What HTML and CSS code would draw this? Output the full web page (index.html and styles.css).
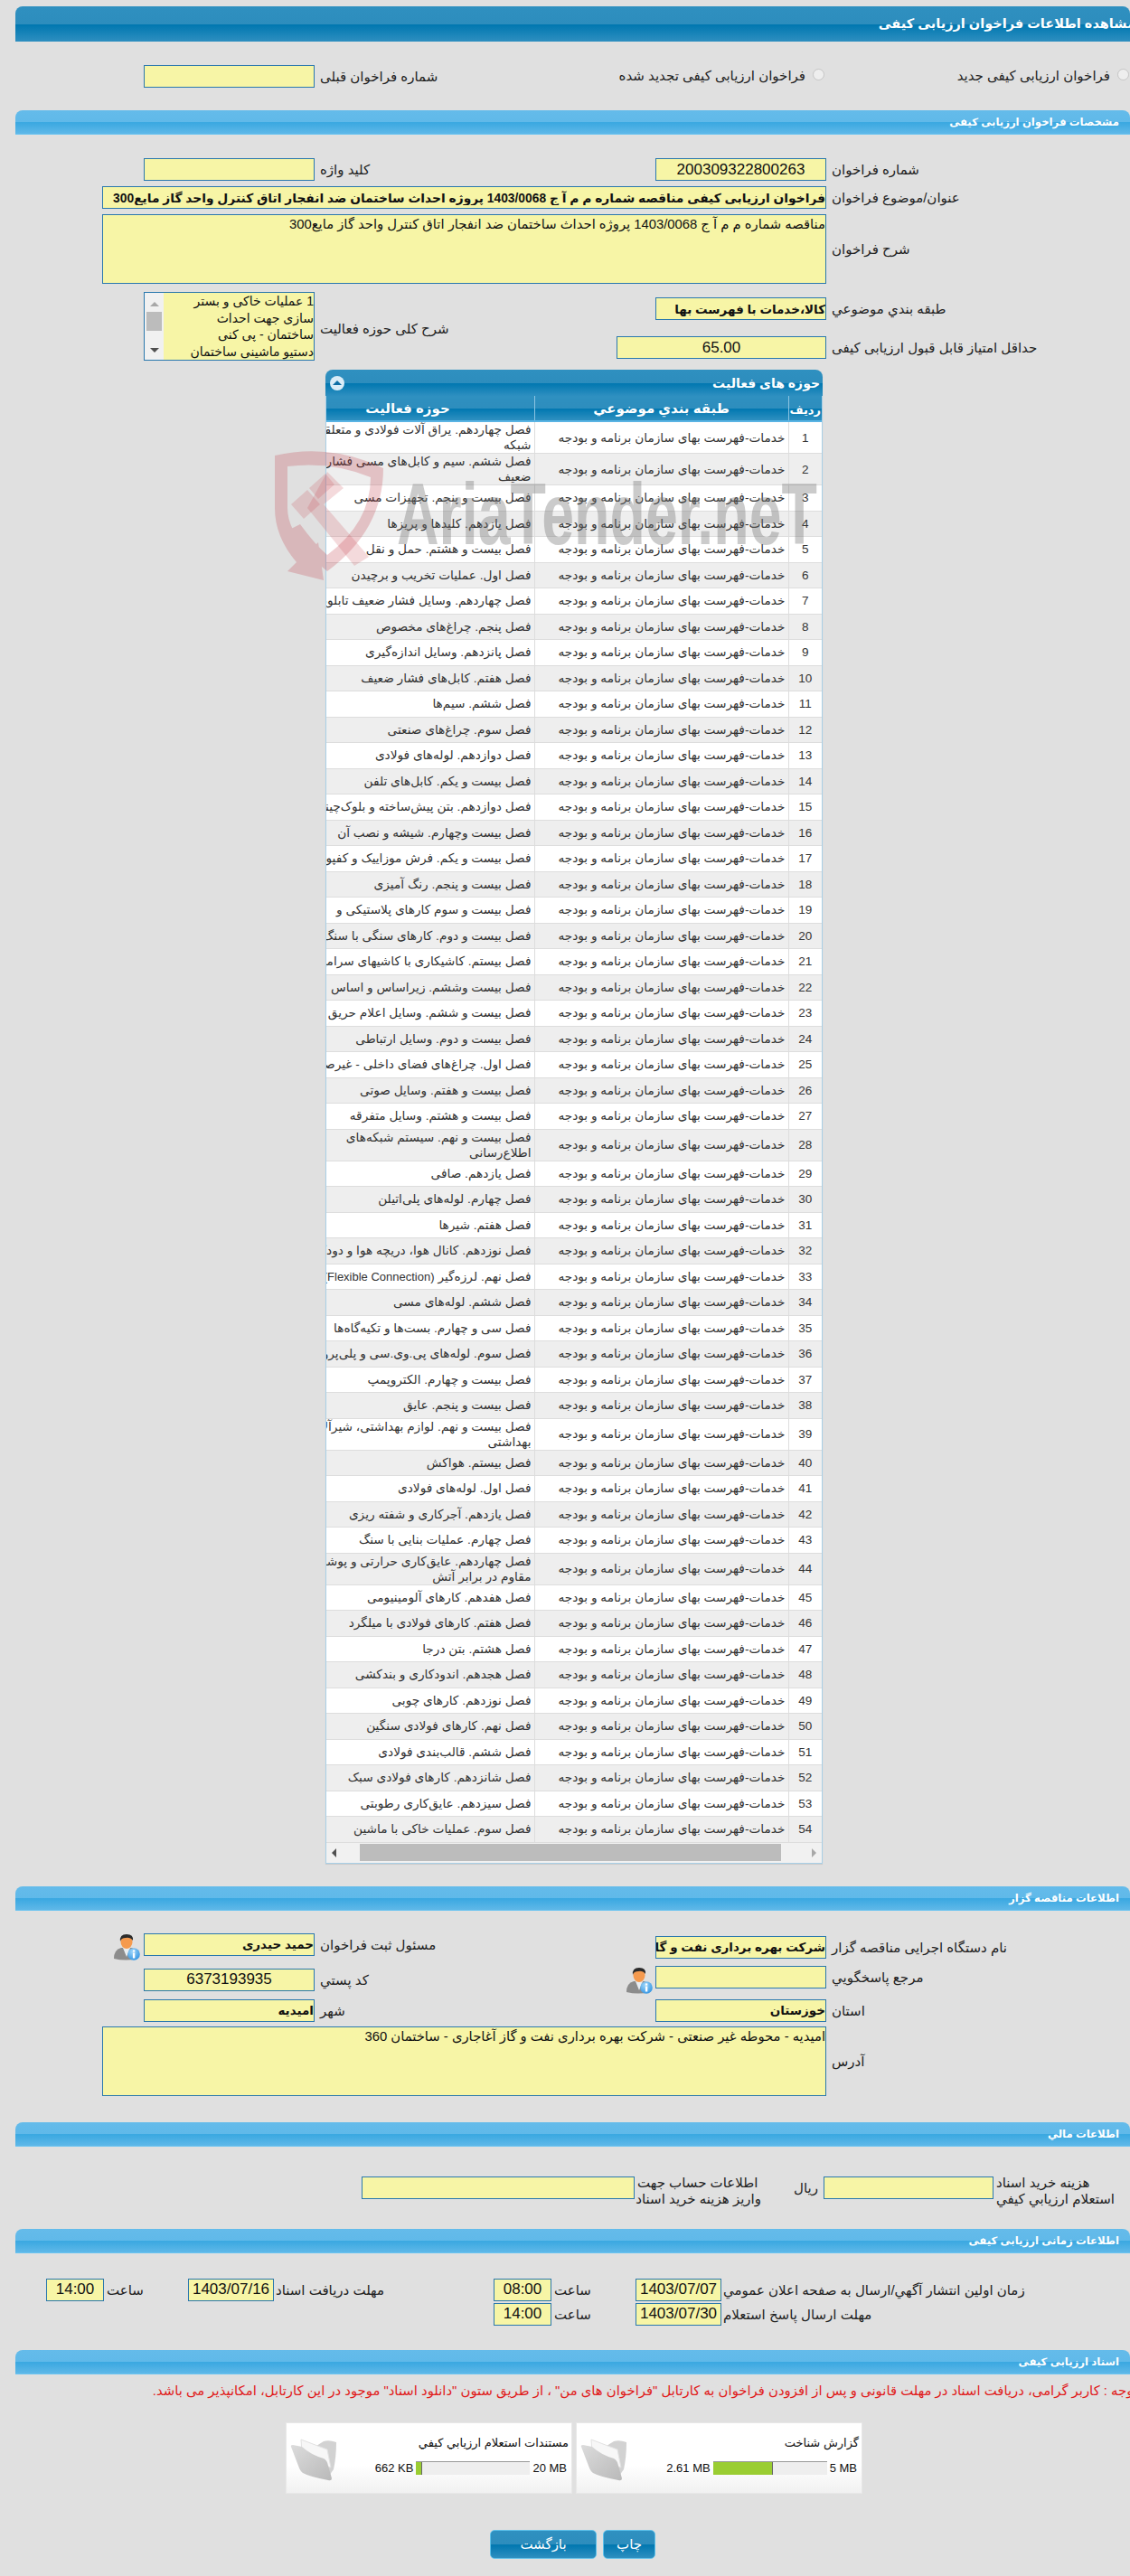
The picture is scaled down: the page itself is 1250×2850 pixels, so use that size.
FILE: index.html
```html
<!DOCTYPE html>
<html lang="fa" dir="rtl">
  <head>
    <meta charset="UTF-8" />
    <title>مشاهده اطلاعات فراخوان ارزیابی کیفی</title>
    <link rel="stylesheet" href="styles.css">
  </head>
  <body>
    <!-- shared icons -->
    <svg class="icon-defs" aria-hidden="true">
      <defs>
        <linearGradient id="folderFront" x1="0" y1="0" x2="1" y2="1">
          <stop offset="0" stop-color="#dcdcdc" />
          <stop offset="1" stop-color="#b9b9b9" />
        </linearGradient>
        <radialGradient id="infoBall" cx="0.4" cy="0.3" r="0.8">
          <stop offset="0" stop-color="#9fd6fa" />
          <stop offset="1" stop-color="#2a8fe0" />
        </radialGradient>
      </defs>
      <symbol id="folderIcon" viewBox="0 0 56 50">
        <path d="M14 4 L30 10 L38 5 Q44 3 52 6 Q52 22 49 36 L42 46 L14 20 Z" fill="#d2d2d2" />
        <path d="M13 3 L42 14 L46 34 L30 28 L14 18 Z" fill="#f7f7f7" stroke="#e2e2e2" stroke-width="1" />
        <path d="M2 11 Q1 9 4 9 L14 11 Q24 20 38 24 Q42 26 43 32 L47 46 Q47 49 43 48 Q22 44 15 40 Q12 38 10 32 Z" fill="url(#folderFront)" />
      </symbol>
      <symbol id="personIcon" viewBox="0 0 30 30">
        <path d="M1 28 Q1 18 9 16 L21 16 Q27 18 27 28 Q14 31 1 28 Z" fill="#8c8c8c" />
        <path d="M11 16 L15 26 L19 16 Z" fill="#e9eef2" />
        <ellipse cx="15" cy="9.5" rx="6.5" ry="7.5" fill="#f59a4e" />
        <path d="M8 9 Q7 1 15 1 Q23 1 22 8 Q19 4 14 5 Q9 5 8 9 Z" fill="#2b2b2b" />
        <circle cx="23" cy="23" r="6.8" fill="url(#infoBall)" />
        <rect x="21.9" y="21.5" width="2.4" height="6" fill="#fff" />
        <rect x="21.9" y="18.4" width="2.4" height="2.2" fill="#fff" />
      </symbol>
    </svg>

    <div class="page">
      <h1 class="page-title"><span>مشاهده اطلاعات فراخوان ارزیابی کیفی</span></h1>

      <div class="row row-radio">
        <label class="radio-item radio-new"><input type="radio" disabled /> فراخوان ارزیابی کیفی جدید</label>
        <label class="radio-item radio-renew"><input type="radio" disabled /> فراخوان ارزیابی کیفی تجدید شده</label>
        <div class="label label-prev">شماره فراخوان قبلی</div>
        <input class="field field-md" readonly />
      </div>

      <!-- مشخصات -->
      <h2 class="section-head">مشخصات فراخوان ارزیابی کیفی</h2>

      <div class="row first-row">
        <div class="label label-a">شماره فراخوان</div>
        <input class="field field-md center" value="200309322800263" readonly />
        <div class="label label-b">کلید واژه</div>
        <input class="field field-md" readonly />
      </div>
      <div class="row gap-row">
        <div class="label label-a">عنوان/موضوع فراخوان</div>
        <input class="field field-wide bold field-title" value="فراخوان ارزیابی کیفی مناقصه شماره م م آ ج 1403/0068 پروژه احداث ساختمان ضد انفجار اتاق کنترل واحد گاز مایع300" readonly />
      </div>
      <div class="row gap-row row-center">
        <div class="label label-a">شرح فراخوان</div>
        <textarea class="field field-wide area" readonly>مناقصه شماره م م آ ج 1403/0068 پروژه احداث ساختمان ضد انفجار اتاق کنترل واحد گاز مایع300</textarea>
      </div>

      <div class="row group-row">
        <div class="group-a">
          <div class="row sub-select">
            <div class="label label-a">طبقه بندي موضوعي</div>
            <input class="field field-md bold" value="کالا،خدمات با فهرست بها" readonly />
          </div>
          <div class="row sub-score">
            <div class="label label-a">حداقل امتیاز قابل قبول ارزیابی کیفی</div>
            <input class="field field-score center" value="65.00" readonly />
          </div>
        </div>
        <div class="label label-group">شرح کلی حوزه فعالیت</div>
        <div class="listbox">
          <div class="listbox-text">
            <div>1 عملیات خاکی و بستر</div>
            <div>سازی جهت احداث</div>
            <div>ساختمان - پی کنی</div>
            <div>دستیو ماشینی ساختمان</div>
          </div>
          <div class="listbox-bar">
            <span class="arrow-up"></span>
            <span class="listbox-thumb"></span>
            <span class="arrow-down"></span>
          </div>
        </div>
      </div>

      <!-- جدول حوزه ها -->
      <div class="panel">
        <div class="panel-head">
          <span class="panel-title">حوزه های فعالیت</span>
          <span class="collapse-btn"><span class="collapse-tri"></span></span>
        </div>
        <div class="table-scroll">
          <table class="activity-table">
            <colgroup>
              <col class="col-num" /><col class="col-cat" /><col class="col-act" />
            </colgroup>
            <thead>
              <tr><th class="th-num">ردیف</th><th>طبقه بندي موضوعي</th><th>حوزه فعالیت</th></tr>
            </thead>
            <tbody>
              <tr class="tall"><td class="num">1</td><td>خدمات-فهرست بهای سازمان برنامه و بودجه</td><td>فصل چهاردهم. یراق آلات فولادی و متعلقات<br>شبکه</td></tr>
              <tr class="tall"><td class="num">2</td><td>خدمات-فهرست بهای سازمان برنامه و بودجه</td><td>فصل ششم. سیم و کابل‌های مسی فشار<br>ضعیف</td></tr>
              <tr><td class="num">3</td><td>خدمات-فهرست بهای سازمان برنامه و بودجه</td><td>فصل بیست و پنجم. تجهیزات مسی</td></tr>
              <tr><td class="num">4</td><td>خدمات-فهرست بهای سازمان برنامه و بودجه</td><td>فصل یازدهم. کلیدها و پریزها</td></tr>
              <tr><td class="num">5</td><td>خدمات-فهرست بهای سازمان برنامه و بودجه</td><td>فصل بیست و هشتم. حمل و نقل</td></tr>
              <tr><td class="num">6</td><td>خدمات-فهرست بهای سازمان برنامه و بودجه</td><td>فصل اول. عملیات تخریب و برچیدن</td></tr>
              <tr><td class="num">7</td><td>خدمات-فهرست بهای سازمان برنامه و بودجه</td><td>فصل چهاردهم. وسایل فشار ضعیف تابلویی</td></tr>
              <tr><td class="num">8</td><td>خدمات-فهرست بهای سازمان برنامه و بودجه</td><td>فصل پنجم. چراغ‌های مخصوص</td></tr>
              <tr><td class="num">9</td><td>خدمات-فهرست بهای سازمان برنامه و بودجه</td><td>فصل پانزدهم. وسایل اندازه‌گیری</td></tr>
              <tr><td class="num">10</td><td>خدمات-فهرست بهای سازمان برنامه و بودجه</td><td>فصل هفتم. کابل‌های فشار ضعیف</td></tr>
              <tr><td class="num">11</td><td>خدمات-فهرست بهای سازمان برنامه و بودجه</td><td>فصل ششم. سیم‌ها</td></tr>
              <tr><td class="num">12</td><td>خدمات-فهرست بهای سازمان برنامه و بودجه</td><td>فصل سوم. چراغ‌های صنعتی</td></tr>
              <tr><td class="num">13</td><td>خدمات-فهرست بهای سازمان برنامه و بودجه</td><td>فصل دوازدهم. لوله‌های فولادی</td></tr>
              <tr><td class="num">14</td><td>خدمات-فهرست بهای سازمان برنامه و بودجه</td><td>فصل بیست و یکم. کابل‌های تلفن</td></tr>
              <tr><td class="num">15</td><td>خدمات-فهرست بهای سازمان برنامه و بودجه</td><td>فصل دوازدهم. بتن پیش‌ساخته و بلوک‌چینی</td></tr>
              <tr><td class="num">16</td><td>خدمات-فهرست بهای سازمان برنامه و بودجه</td><td>فصل بیست وچهارم. شیشه و نصب آن</td></tr>
              <tr><td class="num">17</td><td>خدمات-فهرست بهای سازمان برنامه و بودجه</td><td>فصل بیست و یکم. فرش موزاییک و کفپوش</td></tr>
              <tr><td class="num">18</td><td>خدمات-فهرست بهای سازمان برنامه و بودجه</td><td>فصل بیست و پنجم. رنگ آمیزی</td></tr>
              <tr><td class="num">19</td><td>خدمات-فهرست بهای سازمان برنامه و بودجه</td><td>فصل بیست و سوم کارهای پلاستیکی و</td></tr>
              <tr><td class="num">20</td><td>خدمات-فهرست بهای سازمان برنامه و بودجه</td><td>فصل بیست و دوم. کارهای سنگی با سنگ</td></tr>
              <tr><td class="num">21</td><td>خدمات-فهرست بهای سازمان برنامه و بودجه</td><td>فصل بیستم. کاشیکاری با کاشیهای سرامیکی</td></tr>
              <tr><td class="num">22</td><td>خدمات-فهرست بهای سازمان برنامه و بودجه</td><td>فصل بیست وششم. زیراساس و اساس</td></tr>
              <tr><td class="num">23</td><td>خدمات-فهرست بهای سازمان برنامه و بودجه</td><td>فصل بیست و ششم. وسایل اعلام حریق</td></tr>
              <tr><td class="num">24</td><td>خدمات-فهرست بهای سازمان برنامه و بودجه</td><td>فصل بیست و دوم. وسایل ارتباطی</td></tr>
              <tr><td class="num">25</td><td>خدمات-فهرست بهای سازمان برنامه و بودجه</td><td>فصل اول. چراغ‌های فضای داخلی - غیرصنعتی</td></tr>
              <tr><td class="num">26</td><td>خدمات-فهرست بهای سازمان برنامه و بودجه</td><td>فصل بیست و هفتم. وسایل صوتی</td></tr>
              <tr><td class="num">27</td><td>خدمات-فهرست بهای سازمان برنامه و بودجه</td><td>فصل بیست و هشتم. وسایل متفرقه</td></tr>
              <tr class="tall"><td class="num">28</td><td>خدمات-فهرست بهای سازمان برنامه و بودجه</td><td>فصل بیست و نهم. سیستم شبکه‌های<br>اطلاع‌رسانی</td></tr>
              <tr><td class="num">29</td><td>خدمات-فهرست بهای سازمان برنامه و بودجه</td><td>فصل یازدهم. صافی</td></tr>
              <tr><td class="num">30</td><td>خدمات-فهرست بهای سازمان برنامه و بودجه</td><td>فصل چهارم. لوله‌های پلی‌اتیلن</td></tr>
              <tr><td class="num">31</td><td>خدمات-فهرست بهای سازمان برنامه و بودجه</td><td>فصل هفتم. شیرها</td></tr>
              <tr><td class="num">32</td><td>خدمات-فهرست بهای سازمان برنامه و بودجه</td><td>فصل نوزدهم. کانال هوا، دریچه هوا و دودکش</td></tr>
              <tr><td class="num">33</td><td>خدمات-فهرست بهای سازمان برنامه و بودجه</td><td>فصل نهم. لرزه‌گیر <span class="latin">(Flexible Connection)</span></td></tr>
              <tr><td class="num">34</td><td>خدمات-فهرست بهای سازمان برنامه و بودجه</td><td>فصل ششم. لوله‌های مسی</td></tr>
              <tr><td class="num">35</td><td>خدمات-فهرست بهای سازمان برنامه و بودجه</td><td>فصل سی و چهارم. بست‌ها و تکیه‌گاه‌ها</td></tr>
              <tr><td class="num">36</td><td>خدمات-فهرست بهای سازمان برنامه و بودجه</td><td>فصل سوم. لوله‌های پی.وی.سی و پلی‌پروپیلن</td></tr>
              <tr><td class="num">37</td><td>خدمات-فهرست بهای سازمان برنامه و بودجه</td><td>فصل بیست و چهارم. الکتروپمپ</td></tr>
              <tr><td class="num">38</td><td>خدمات-فهرست بهای سازمان برنامه و بودجه</td><td>فصل بیست و پنجم. عایق</td></tr>
              <tr class="tall"><td class="num">39</td><td>خدمات-فهرست بهای سازمان برنامه و بودجه</td><td>فصل بیست و نهم. لوازم بهداشتی، شیرآلات<br>بهداشتی</td></tr>
              <tr><td class="num">40</td><td>خدمات-فهرست بهای سازمان برنامه و بودجه</td><td>فصل بیستم. هواکش</td></tr>
              <tr><td class="num">41</td><td>خدمات-فهرست بهای سازمان برنامه و بودجه</td><td>فصل اول. لوله‌های فولادی</td></tr>
              <tr><td class="num">42</td><td>خدمات-فهرست بهای سازمان برنامه و بودجه</td><td>فصل یازدهم. آجرکاری و شفته ریزی</td></tr>
              <tr><td class="num">43</td><td>خدمات-فهرست بهای سازمان برنامه و بودجه</td><td>فصل چهارم. عملیات بنایی با سنگ</td></tr>
              <tr class="tall"><td class="num">44</td><td>خدمات-فهرست بهای سازمان برنامه و بودجه</td><td>فصل چهاردهم. عایق‌کاری حرارتی و پوشش‌های<br>مقاوم در برابر آتش</td></tr>
              <tr><td class="num">45</td><td>خدمات-فهرست بهای سازمان برنامه و بودجه</td><td>فصل هفدهم. کارهای آلومینیومی</td></tr>
              <tr><td class="num">46</td><td>خدمات-فهرست بهای سازمان برنامه و بودجه</td><td>فصل هفتم. کارهای فولادی با میلگرد</td></tr>
              <tr><td class="num">47</td><td>خدمات-فهرست بهای سازمان برنامه و بودجه</td><td>فصل هشتم. بتن درجا</td></tr>
              <tr><td class="num">48</td><td>خدمات-فهرست بهای سازمان برنامه و بودجه</td><td>فصل هجدهم. اندودکاری و بندکشی</td></tr>
              <tr><td class="num">49</td><td>خدمات-فهرست بهای سازمان برنامه و بودجه</td><td>فصل نوزدهم. کارهای چوبی</td></tr>
              <tr><td class="num">50</td><td>خدمات-فهرست بهای سازمان برنامه و بودجه</td><td>فصل نهم. کارهای فولادی سنگین</td></tr>
              <tr><td class="num">51</td><td>خدمات-فهرست بهای سازمان برنامه و بودجه</td><td>فصل ششم. قالب‌بندی فولادی</td></tr>
              <tr><td class="num">52</td><td>خدمات-فهرست بهای سازمان برنامه و بودجه</td><td>فصل شانزدهم. کارهای فولادی سبک</td></tr>
              <tr><td class="num">53</td><td>خدمات-فهرست بهای سازمان برنامه و بودجه</td><td>فصل سیزدهم. عایق‌کاری رطوبتی</td></tr>
              <tr><td class="num">54</td><td>خدمات-فهرست بهای سازمان برنامه و بودجه</td><td>فصل سوم. عملیات خاکی با ماشین</td></tr>
            </tbody>
          </table>
        </div>
        <div class="hscroll">
          <span class="arrow-left"></span>
          <span class="hscroll-thumb"></span>
          <span class="arrow-right"></span>
        </div>
      </div>

      <!-- watermark over the table -->
      <svg class="watermark" viewBox="0 0 620 150" aria-hidden="true">
        <path d="M8 8 Q70 -6 128 22 Q128 90 66 136 Q42 118 24 90 L36 84 Q52 106 66 118 Q114 82 114 32 Q70 14 22 20 L22 66 Q22 78 28 90 L46 114 L56 104 L62 146 L22 136 L32 126 Q8 98 8 66 Z" class="wm-red" />
        <path d="M26 62 L44 46 L58 62 L40 78 Z M46 44 L64 28 L74 40 L56 56 Z" class="wm-red-light" />
        <path d="M66 26 L84 44 L62 62 L112 120 L96 130 L44 66 Z" class="wm-red-light" />
        <text x="143" y="106" class="wm-text" textLength="465" lengthAdjust="spacingAndGlyphs">AriaTender.neT</text>
      </svg>

      <!-- مناقصه گزار -->
      <h2 class="section-head head-owner">اطلاعات مناقصه گزار</h2>

      <div class="row owner-row">
        <div class="label label-a offset-3">نام دستگاه اجرایی مناقصه گزار</div>
        <input class="field field-md bold offset-3" value="شرکت بهره برداری نفت و گاز آغاجاری" readonly />
        <div class="label label-b">مسئول ثبت فراخوان</div>
        <input class="field field-md bold" value="حمید حیدری" readonly />
        <svg class="person"><use href="#personIcon" /></svg>
      </div>
      <div class="row row-contact">
        <div class="label label-a">مرجع پاسخگويي</div>
        <input class="field field-md" readonly />
        <div class="label-b-icon">
          <svg class="person person-a"><use href="#personIcon" /></svg>
          <div class="label label-b-inner offset-3">کد پستي</div>
        </div>
        <input class="field field-md center offset-3" value="6373193935" readonly />
      </div>
      <div class="row row-city">
        <div class="label label-a">استان</div>
        <input class="field field-md bold" value="خوزستان" readonly />
        <div class="label label-b">شهر</div>
        <input class="field field-md bold" value="امیدیه" readonly />
      </div>
      <div class="row row-address row-center">
        <div class="label label-a">آدرس</div>
        <textarea class="field field-wide area" readonly>امیدیه - محوطه غیر صنعتی - شرکت بهره برداری نفت و گاز آغاجاری - ساختمان 360</textarea>
      </div>

      <!-- مالی -->
      <h2 class="section-head head-money">اطلاعات مالي</h2>

      <div class="row row-money">
        <div class="label label-money">هزینه خرید اسناد<br>استعلام ارزیابي کیفي</div>
        <input class="field field-cost" readonly />
        <div class="label rial">ریال</div>
        <div class="label label-account">اطلاعات حساب جهت<br>واریز هزینه خرید اسناد</div>
        <input class="field field-account" readonly />
      </div>

      <!-- زمان -->
      <h2 class="section-head head-time">اطلاعات زمانی ارزیابی کیفی</h2>

      <div class="row row-time">
        <div class="label label-date">زمان اولین انتشار آگهي/ارسال به صفحه اعلان عمومي</div>
        <input class="field field-date center" value="1403/07/07" readonly />
        <div class="label label-hour">ساعت</div>
        <input class="field field-time center" value="08:00" readonly />
        <div class="label label-date2">مهلت دریافت اسناد</div>
        <input class="field field-date center" value="1403/07/16" readonly />
        <div class="label label-hour">ساعت</div>
        <input class="field field-time center" value="14:00" readonly />
      </div>
      <div class="row row-time2">
        <div class="label label-date">مهلت ارسال پاسخ استعلام</div>
        <input class="field field-date center" value="1403/07/30" readonly />
        <div class="label label-hour">ساعت</div>
        <input class="field field-time center" value="14:00" readonly />
      </div>

      <!-- اسناد -->
      <h2 class="section-head head-docs">اسناد ارزیابی کیفی</h2>

      <p class="note">توجه : کاربر گرامی، دریافت اسناد در مهلت قانونی و پس از افزودن فراخوان به کارتابل "فراخوان های من" ، از طریق ستون "دانلود اسناد" موجود در این کارتابل، امکانپذیر می باشد.</p>

      <div class="doc-list">
        <div class="doc-card">
          <div class="doc-body">
            <div class="doc-title">گزارش شناخت</div>
            <div class="doc-usage">
              <span class="doc-size">5 MB</span>
              <div class="doc-bar"><div class="doc-fill" style="width: 53%"></div></div>
              <span class="doc-size">2.61 MB</span>
            </div>
          </div>
          <svg class="folder"><use href="#folderIcon" /></svg>
        </div>
        <div class="doc-card">
          <div class="doc-body">
            <div class="doc-title">مستندات استعلام ارزيابي کيفي</div>
            <div class="doc-usage">
              <span class="doc-size">20 MB</span>
              <div class="doc-bar"><div class="doc-fill" style="width: 5%"></div></div>
              <span class="doc-size">662 KB</span>
            </div>
          </div>
          <svg class="folder"><use href="#folderIcon" /></svg>
        </div>
      </div>

      <div class="actions">
        <button class="btn btn-print" type="button">چاپ</button>
        <button class="btn btn-back" type="button">بازگشت</button>
      </div>
    </div>
  </body>
</html>
```

FILE: styles.css
```css
* {
  margin: 0;
  padding: 0;
  box-sizing: border-box;
}

html,
body {
  overflow: hidden;
}

body {
  height: 2850px;
  background-color: #e0e0e0;
  font-family: "Liberation Sans", "DejaVu Sans", sans-serif;
  font-size: 15px;
  color: #111;
}

.icon-defs {
  position: absolute;
  width: 0;
  height: 0;
}

.page {
  position: relative;
  padding: 7px 0 0 17px;
}

/* headers */
.page-title {
  height: 39px;
  border-radius: 8px 8px 0 0;
  background: linear-gradient(#2f90c0 0%, #2d8dbd 50%, #0077b0 52%, #2e8fc0 100%);
  color: #fff;
  font-size: 14.5px;
  line-height: 38px;
  white-space: nowrap;
  overflow: hidden;
}

.page-title span {
  display: inline-block;
  margin-right: -6px;
}

.section-head {
  height: 27px;
  margin-top: 26px;
  padding-right: 12px;
  border-radius: 8px 8px 0 0;
  border-bottom: 1px solid #6cc4f0;
  background: linear-gradient(#64bbea 0%, #60b9e9 50%, #3aa8e1 52%, #5fb8e8 100%);
  color: #fff;
  font-size: 11.7px;
  font-weight: bold;
  line-height: 26px;
}

.head-owner {
  margin-top: 25px;
}

.head-money {
  margin-top: 29px;
}

.head-time {
  margin-top: 22px;
}

.head-docs {
  margin-top: 27px;
}

/* form rows */
.row {
  display: flex;
  align-items: flex-start;
}

.row-center {
  align-items: center;
}

.first-row {
  margin-top: 26px;
}

.gap-row {
  margin-top: 6px;
}

.label {
  flex: none;
  line-height: 25px;
  white-space: nowrap;
  text-align: left;
  padding-left: 6px;
  color: #222;
}

.label-a {
  width: 336px;
}

.label-b {
  width: 377px;
}

.field {
  flex: none;
  display: block;
  height: 25px;
  border: 1px solid #2a78ad;
  border-radius: 0;
  background-color: #f7f5a6;
  font-family: inherit;
  font-size: 17px;
  color: #111;
  text-align: right;
  outline: none;
}

.field-md {
  width: 189px;
}

.field-wide {
  width: 801px;
}

.area {
  height: 77px;
  font-size: 14.8px;
  line-height: 20px;
  resize: none;
  overflow: hidden;
}

.center {
  text-align: center;
}

.bold {
  font-size: 13.5px;
  font-weight: bold;
}

.field-title {
  font-size: 13.8px;
}

.offset-3 {
  margin-top: 3px;
}

/* top radios */
.row-radio {
  margin-top: 26px;
  height: 24px;
}

.radio-item {
  flex: none;
  display: flex;
  align-items: center;
  gap: 8px;
  height: 24px;
  white-space: nowrap;
  color: #222;
}

.radio-item input {
  width: 13px;
  height: 13px;
  margin: 0 0 4px;
}

.radio-new {
  width: 338px;
  padding-right: 1px;
}

.radio-renew {
  width: 220px;
}

.label-prev {
  width: 344px;
}

/* group with the listbox */
.group-row {
  margin-top: 9px;
  height: 76px;
}

.group-a {
  flex: none;
  width: 525px;
}

.sub-select {
  margin-top: 6px;
}

.sub-score {
  margin-top: 18px;
}

.field-score {
  width: 232px;
}

.label-group {
  width: 377px;
  line-height: 82px;
}

.listbox {
  flex: none;
  display: flex;
  width: 189px;
  height: 76px;
  border: 1px solid #2a78ad;
  background-color: #f7f5a6;
  overflow: hidden;
}

.listbox-text {
  flex: 1;
  font-size: 14px;
  line-height: 18.5px;
  white-space: nowrap;
}

.listbox-bar {
  flex: none;
  display: flex;
  flex-direction: column;
  align-items: center;
  width: 21px;
  padding: 10px 0 8px;
  background-color: #f1f1f1;
}

.listbox-thumb {
  flex: none;
  width: 17px;
  height: 21px;
  margin: 6px 0 auto;
  background-color: #bcbcbc;
}

.arrow-up {
  border: 5px solid transparent;
  border-top: 0;
  border-bottom: 5px solid #a8a8a8;
}

.arrow-down {
  border: 5px solid transparent;
  border-bottom: 0;
  border-top: 5px solid #505050;
}

/* activity table */
.panel {
  width: 550px;
  margin: 10px 340px 0 0;
  border-radius: 8px 8px 0 0;
  overflow: hidden;
  border-bottom: 1px solid #a9cfe6;
  box-shadow: 0 1px 1px #c9c9c9;
}

.panel-head {
  display: flex;
  justify-content: space-between;
  align-items: center;
  height: 29px;
  padding: 0 3px 0 5px;
  background: linear-gradient(#2f90c0 0%, #2d8dbd 50%, #0077b0 52%, #2e8fc0 100%);
  color: #fff;
  font-size: 14px;
  font-weight: bold;
}

.collapse-btn {
  display: flex;
  align-items: center;
  justify-content: center;
  width: 16px;
  height: 16px;
  border-radius: 50%;
  background-color: #d9ecf7;
}

.collapse-tri {
  border: 5px solid transparent;
  border-top: 0;
  border-bottom: 5px solid #0d6ea5;
}

.table-scroll {
  overflow: hidden;
  background-color: #fff;
  border-right: 1px solid #a9cfe6;
  border-left: 1px solid #a9cfe6;
}

.activity-table {
  width: 598px;
  table-layout: fixed;
  border-collapse: collapse;
  font-size: 13.7px;
  color: #333;
}

.col-num {
  width: 37px;
}

.col-cat {
  width: 281px;
}

.col-act {
  width: 280px;
}

.activity-table th {
  height: 28px;
  border-left: 1px solid #8cc4e2;
  border-bottom: 2px solid #5ab4e4;
  background: linear-gradient(#2f90c0 0%, #2d8dbd 50%, #0077b0 52%, #2e8fc0 100%);
  color: #fff;
  font-size: 15px;
  font-weight: bold;
}

.activity-table .th-num {
  font-size: 13px;
  padding-top: 4px;
}

.activity-table td {
  height: 28.5px;
  padding: 0 3px;
  border-left: 1px solid #ddd;
  border-bottom: 1px solid #ddd;
  line-height: 17px;
  white-space: nowrap;
  overflow: hidden;
}

.activity-table tr.tall td {
  height: 35px;
}

.activity-table tbody tr:nth-child(even) {
  background-color: #eee;
}

.activity-table .num {
  font-size: 13.5px;
  text-align: center;
}

.latin {
  font-size: 13px;
}

.hscroll {
  display: flex;
  align-items: center;
  justify-content: space-between;
  height: 22px;
  padding: 0 6px;
  background-color: #f1f1f1;
  border-right: 1px solid #a9cfe6;
  border-left: 1px solid #a9cfe6;
}

.hscroll-thumb {
  width: 466px;
  height: 19px;
  margin-right: 8px;
  background-color: #bcbcbc;
}

.arrow-right {
  border: 5px solid transparent;
  border-left: 0;
  border-right: 5px solid #505050;
}

.arrow-left {
  border: 5px solid transparent;
  border-right: 0;
  border-left: 5px solid #a8a8a8;
}

/* watermark */
.watermark {
  position: absolute;
  left: 296px;
  top: 496px;
  width: 620px;
  height: 150px;
  direction: ltr;
  pointer-events: none;
}

.wm-red {
  fill: rgba(190, 60, 70, 0.25);
}

.wm-red-light {
  fill: rgba(200, 70, 80, 0.2);
}

.wm-text {
  font-family: "Liberation Sans", sans-serif;
  font-size: 97px;
  font-weight: bold;
  fill: rgba(110, 110, 110, 0.36);
}

/* owner rows */
.owner-row {
  margin-top: 25px;
}

.person {
  flex: none;
  width: 30px;
  height: 30px;
  margin-right: 4px;
}

.row-contact {
  margin-top: 6px;
}

.row-city {
  margin-top: 6px;
}

.row-address {
  margin-top: 5px;
}

.label-b-icon {
  flex: none;
  display: flex;
  justify-content: space-between;
  width: 377px;
}

.person-a {
  margin: 1px 3px 0 0;
}

/* money */
.row-money {
  margin-top: 33px;
  height: 36px;
}

.label-money,
.label-account {
  line-height: 18px;
  padding-left: 3px;
  margin-top: -2px;
}

.label-money {
  width: 151px;
}

.field-cost {
  width: 188px;
}

.rial {
  width: 69px;
  text-align: right;
  padding: 0 6px 0 0;
}

.label-account {
  width: 140px;
}

.field-account {
  width: 302px;
}

/* dates */
.row-time {
  margin-top: 28px;
}

.row-time2 {
  margin-top: 2px;
}

.label-date {
  width: 452px;
  padding-left: 2px;
}

.label-date2 {
  width: 243px;
  padding-left: 2px;
}

.label-hour {
  width: 93px;
  padding-left: 3px;
}

.field-date {
  width: 95px;
}

.field-time {
  width: 64px;
}

/* documents */
.note {
  margin: 8px -8px 0 0;
  height: 20px;
  font-size: 14.85px;
  line-height: 20px;
  color: #e01b1b;
  white-space: nowrap;
}

.doc-list {
  display: flex;
  gap: 4px;
  margin: 25px 296px 0 0;
}

.doc-card {
  display: flex;
  width: 317px;
  height: 79px;
  padding: 3px;
  border: 1px solid #e8e8e8;
  background: linear-gradient(#fff 60%, #f1f1f1 100%);
}

.doc-body {
  flex: 1;
}

.doc-title {
  margin-top: 11px;
  font-size: 13px;
  line-height: 16px;
}

.doc-usage {
  display: flex;
  align-items: center;
  gap: 3px;
  margin-top: 12px;
  padding-right: 2px;
  font-size: 13px;
}

.doc-size {
  direction: ltr;
}

.doc-bar {
  width: 126px;
  height: 15px;
  border-top: 1px solid #999;
  background-color: #eee;
}

.doc-fill {
  height: 14px;
  margin-right: auto;
  border-right: 1px solid #666;
  background-color: #9acd32;
}

.folder {
  flex: none;
  width: 56px;
  height: 50px;
  margin-top: 12px;
}

/* buttons */
.actions {
  display: flex;
  justify-content: center;
  gap: 7px;
  margin: 40px 525px 0 0;
  width: 183px;
}

.btn {
  height: 32px;
  border: 1px solid #5bc0ea;
  border-radius: 5px;
  background: linear-gradient(#2f90c0 0%, #2d8dbd 50%, #0077b0 52%, #2e8fc0 100%);
  color: #fff;
  font-family: inherit;
  font-size: 15px;
}

.btn-print {
  width: 58px;
}

.btn-back {
  width: 118px;
}
```
